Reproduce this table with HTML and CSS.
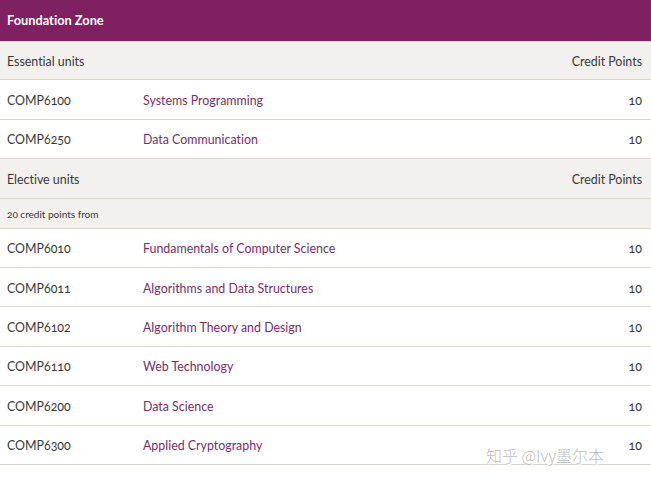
FILE: index.html
```html
<!DOCTYPE html>
<html>
<head>
<meta charset="utf-8">
<link rel="stylesheet" href="styles.css">
</head>
<body>
<div class="zone">
  <div class="zone-title">Foundation Zone</div>
  <div class="row head"><span class="code">Essential units</span><span class="name"></span><span class="cp">Credit Points</span></div>
  <div class="row"><span class="code">COMP6100</span><span class="name">Systems Programming</span><span class="cp">10</span></div>
  <div class="row"><span class="code">COMP6250</span><span class="name">Data Communication</span><span class="cp">10</span></div>
  <div class="row head"><span class="code">Elective units</span><span class="name"></span><span class="cp">Credit Points</span></div>
  <div class="row note"><span class="code">20 credit points from</span></div>
  <div class="row"><span class="code">COMP6010</span><span class="name">Fundamentals of Computer Science</span><span class="cp">10</span></div>
  <div class="row"><span class="code">COMP6011</span><span class="name">Algorithms and Data Structures</span><span class="cp">10</span></div>
  <div class="row"><span class="code">COMP6102</span><span class="name">Algorithm Theory and Design</span><span class="cp">10</span></div>
  <div class="row"><span class="code">COMP6110</span><span class="name">Web Technology</span><span class="cp">10</span></div>
  <div class="row"><span class="code">COMP6200</span><span class="name">Data Science</span><span class="cp">10</span></div>
  <div class="row"><span class="code">COMP6300</span><span class="name">Applied Cryptography</span><span class="cp">10</span></div>
</div>
<div class="watermark">知乎 @Ivy墨尔本</div>
</body>
</html>
```
FILE: styles.css
```css
html, body { margin: 0; padding: 0; background: #fff; }
body {
  font-family: Lato, "Open Sans", sans-serif;
  font-variant-numeric: oldstyle-nums;
  font-variant-ligatures: none;
  font-size: 12.4px;
  color: #383838;
  width: 651px;
  height: 488px;
  overflow: hidden;
  position: relative;
}
.zone-title {
  background: #7f2160;
  color: #fff;
  font-weight: bold;
  font-size: 12.8px;
  height: 41px;
  line-height: 41px;
  padding-left: 7px;
}
.row {
  display: flex;
  align-items: center;
  height: 36.4px;
  border-bottom: 1px solid #d8d6cc;
  padding: 2px 9px 0 7px;
  box-sizing: content-box;
}
.row.head { background: #f2f1ee; }
.row.note { background: #f2f1ee; height: 27px; font-size: 10px; }
.code { width: 136px; flex: none; }
.name { flex: 1; color: #7b2c66; }
.cp { text-align: right; }
.watermark {
  position: absolute;
  left: 486px;
  top: 443px;
  font-family: "Noto Sans CJK SC", sans-serif;
  font-size: 16px;
  font-weight: 300;
  color: rgba(175,175,175,0.85);
  text-shadow: 1px 1px 0 #fff, -1px -1px 0 #fff;
}
```
